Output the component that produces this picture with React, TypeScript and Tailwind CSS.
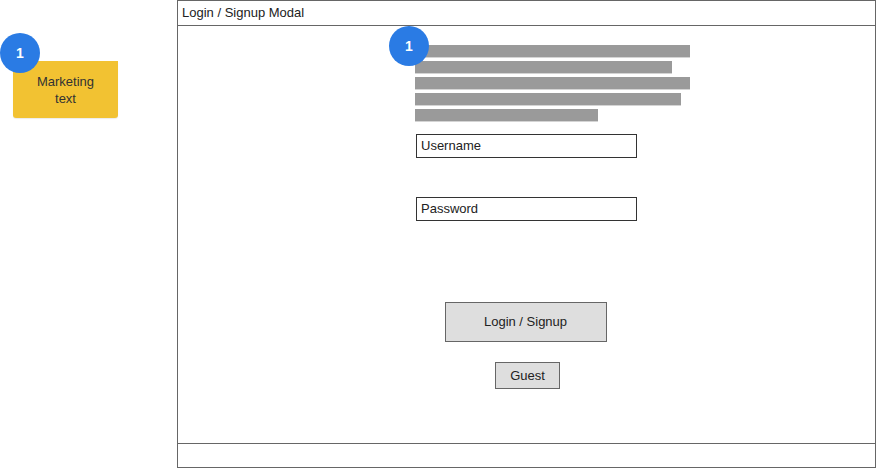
const font = { fontFamily: '"Liberation Sans", Arial, sans-serif' };

function Badge({ className }: { className: string }) {
  return (
    <div className={`absolute flex h-[40px] w-[40px] items-center justify-center rounded-full bg-[#2a7be4] text-[14px] font-bold text-white ${className}`}>
      1
    </div>
  );
}

const bars = [275, 257, 275, 266, 183];

export default function App() {
  return (
    <div className="relative flex h-[468px] w-[876px] bg-white text-[#222]" style={font}>
      <div className="relative w-[177px] shrink-0">
        <div className="ml-[13px] mt-[61px] flex h-[57px] w-[105px] flex-col items-center justify-center rounded-b-[3px] bg-[#f2c232] text-[13px] leading-[17px] text-[#333] shadow-[0_1px_1px_rgba(0,0,0,0.08)]">
          <span>Marketing</span>
          <span>text</span>
        </div>
        <Badge className="left-[0px] top-[33px]" />
      </div>

      <div className="flex flex-1 flex-col border border-[#666]">
        <div className="flex h-[25px] items-center border-b border-[#666] pl-[4px] text-[13px]">Login / Signup Modal</div>

        <div className="relative flex flex-1 flex-col items-center">
          <div className="ml-[237px] mt-[19px] flex w-[275px] flex-col gap-[3px] self-start">
            {bars.map((w, i) => (
              <div key={i} className="h-[13px] border-b border-[#d4d4d4] bg-[#9a9a9a]" style={{ width: w }} />
            ))}
          </div>
          <Badge className="left-[211px] top-0" />

          <div className="mt-[12px] flex h-[24px] w-[221px] items-center border border-[#333] pl-[4px] text-[13px]">Username</div>
          <div className="mt-[39px] flex h-[24px] w-[221px] items-center border border-[#333] pl-[4px] text-[13px]">Password</div>

          <button className="mr-[2px] mt-[81px] h-[40px] w-[162px] border border-[#666] bg-[#dedede] text-[13px] text-[#222]">Login / Signup</button>
          <button className="ml-[2px] mt-[20px] h-[27px] w-[65px] border border-[#666] bg-[#dedede] text-[13px] text-[#222]">Guest</button>
        </div>

        <div className="h-[24px] border-t border-[#666]" />
      </div>
    </div>
  );
}
